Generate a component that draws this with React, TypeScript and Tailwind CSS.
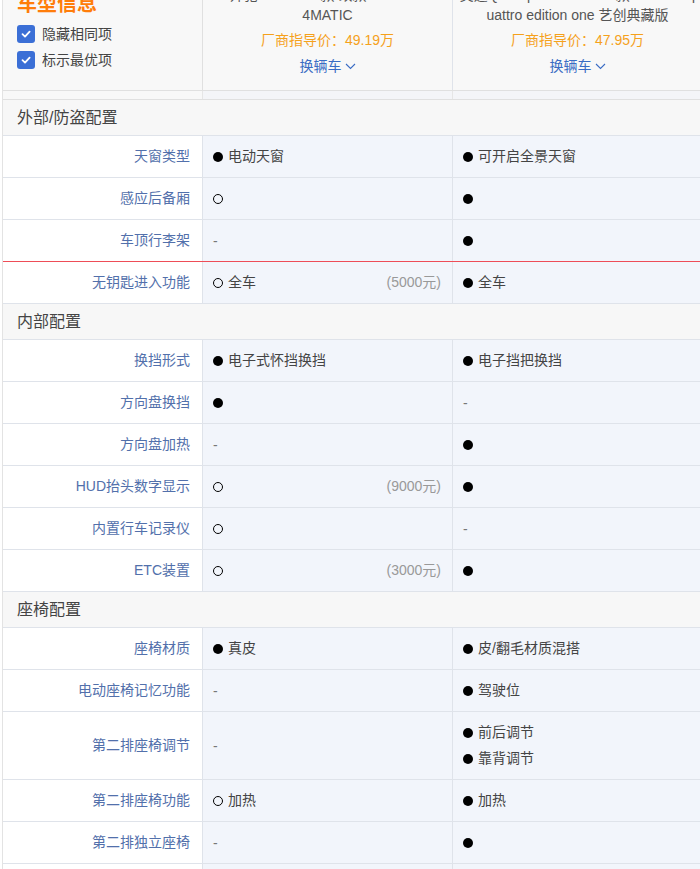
import React from "react";

type Val = { mark?: "full" | "empty" | "none"; text?: string; price?: string; lines?: string[] };
type Row = { label: string; a: Val; b: Val; tall?: boolean; red?: boolean };
type Section = { title: string; rows: Row[] };

const sections: Section[] = [
  {
    title: "外部/防盗配置",
    rows: [
      { label: "天窗类型", a: { mark: "full", text: "电动天窗" }, b: { mark: "full", text: "可开启全景天窗" } },
      { label: "感应后备厢", a: { mark: "empty" }, b: { mark: "full" } },
      { label: "车顶行李架", a: { mark: "none" }, b: { mark: "full" }, red: true },
      { label: "无钥匙进入功能", a: { mark: "empty", text: "全车", price: "(5000元)" }, b: { mark: "full", text: "全车" } },
    ],
  },
  {
    title: "内部配置",
    rows: [
      { label: "换挡形式", a: { mark: "full", text: "电子式怀挡换挡" }, b: { mark: "full", text: "电子挡把换挡" } },
      { label: "方向盘换挡", a: { mark: "full" }, b: { mark: "none" } },
      { label: "方向盘加热", a: { mark: "none" }, b: { mark: "full" } },
      { label: "HUD抬头数字显示", a: { mark: "empty", price: "(9000元)" }, b: { mark: "full" } },
      { label: "内置行车记录仪", a: { mark: "empty" }, b: { mark: "none" } },
      { label: "ETC装置", a: { mark: "empty", price: "(3000元)" }, b: { mark: "full" } },
    ],
  },
  {
    title: "座椅配置",
    rows: [
      { label: "座椅材质", a: { mark: "full", text: "真皮" }, b: { mark: "full", text: "皮/翻毛材质混搭" } },
      { label: "电动座椅记忆功能", a: { mark: "none" }, b: { mark: "full", text: "驾驶位" } },
      { label: "第二排座椅调节", a: { mark: "none" }, b: { lines: ["前后调节", "靠背调节"] }, tall: true },
      { label: "第二排座椅功能", a: { mark: "empty", text: "加热" }, b: { mark: "full", text: "加热" } },
      { label: "第二排独立座椅", a: { mark: "none" }, b: { mark: "full" } },
      { label: "", a: {}, b: {} },
    ],
  },
];

function Mark({ m }: { m?: Val["mark"] }) {
  if (m === "full") return <span className="inline-block w-[10px] h-[10px] rounded-full bg-black shrink-0" />;
  if (m === "empty") return <span className="inline-block w-[10px] h-[10px] rounded-full border-[1.5px] border-solid border-black shrink-0" />;
  if (m === "none") return <span className="text-[#777] leading-none">-</span>;
  return null;
}

function Cell({ v }: { v: Val }) {
  return (
    <div className="w-[250px] shrink-0 border-r border-[#dfe3ea] bg-[#f2f5fb] flex items-center pl-[10px] pr-[11px] text-[14px] text-[#444]">
      {v.lines ? (
        <div className="flex flex-col">
          {v.lines.map((l) => (
            <div key={l} className="flex items-center gap-[5px] h-[26px]">
              <Mark m="full" />
              <span>{l}</span>
            </div>
          ))}
        </div>
      ) : (
        <>
          <div className="flex items-center gap-[5px]">
            <Mark m={v.mark} />
            {v.text && <span>{v.text}</span>}
          </div>
          {v.price && <span className="ml-auto text-[#999]">{v.price}</span>}
        </>
      )}
    </div>
  );
}

function Check({ label }: { label: string }) {
  return (
    <div className="flex items-center h-[26px] gap-[7px]">
      <span className="w-[18px] h-[18px] rounded-[3px] bg-[#3b6fd6] flex items-center justify-center">
        <svg width="12" height="12" viewBox="0 0 12 12" fill="none">
          <path d="M2.5 6.2 5 8.6 9.6 3.6" stroke="white" strokeWidth="1.8" strokeLinecap="round" strokeLinejoin="round" />
        </svg>
      </span>
      <span className="text-[14px] text-[#444]">{label}</span>
    </div>
  );
}

function CarHead({ l1, l2, price }: { l1: string; l2: string; price: string }) {
  return (
    <div className="w-[250px] shrink-0 border-r border-[#dfe3ea] flex flex-col items-center text-center">
      <div className="-mt-[15px] leading-[20px] text-[14px] text-[#555] whitespace-nowrap">{l1}</div>
      <div className="leading-[20px] text-[14px] text-[#555] whitespace-nowrap">{l2}</div>
      <div className="mt-[3px] leading-[24px] text-[14px] text-[#f5a11c]">厂商指导价：{price}</div>
      <div className="mt-[2px] leading-[24px] text-[14px] text-[#3a6cc4] flex items-center gap-[3px]">
        换辆车
        <svg width="11" height="7" viewBox="0 0 11 7" fill="none">
          <path d="M1 1 5.5 5.5 10 1" stroke="#3a6cc4" strokeWidth="1.1" />
        </svg>
      </div>
    </div>
  );
}

function TableRow({ r }: { r: Row }) {
  const cells = (
    <>
      <div className="w-[200px] shrink-0 border-r border-[#dfe3ea] flex items-center justify-end pr-[12px] text-[14px] text-[#5270ab]">
        {r.label}
      </div>
      <Cell v={r.a} />
      <Cell v={r.b} />
    </>
  );
  if (r.red)
    return (
      <>
        <div className="flex h-[41px]">{cells}</div>
        {/* hover marker line */}
        <div className="h-px bg-[#ee4d57]" />
      </>
    );
  if (r.tall) return <div className="flex h-[68px] border-b border-[#dfe3ea]">{cells}</div>;
  return <div className="flex h-[42px] border-b border-[#dfe3ea]">{cells}</div>;
}

export default function App() {
  return (
    <div
      className="w-[700px] h-[869px] overflow-hidden bg-white"
      style={{ fontFamily: '"Liberation Sans", "Noto Sans CJK SC", sans-serif' }}
    >
      <div className="ml-[2px] border-l border-[#e3e3e3] w-[900px]">
        {/* Header */}
        <div className="flex h-[91px] border-b border-[#e0e0e0] bg-[#f8f8f8] overflow-hidden">
          <div className="w-[200px] shrink-0 border-r border-[#e0e0e0] pl-[14px]">
            <div className="-mt-[8px] h-[24px] leading-[24px] text-[20px] font-bold text-[#ff7d0a]">车型信息</div>
            <div className="mt-[5px]">
              <Check label="隐藏相同项" />
              <Check label="标示最优项" />
            </div>
          </div>
          <CarHead l1="奔驰GLE 2023款 改款 GLE 350" l2="4MATIC" price="49.19万" />
          <CarHead l1="奥迪Q5L Sportback 2021款 45 TFSI q" l2="uattro edition one 艺创典藏版" price="47.95万" />
        </div>
        <div className="flex h-[9px] border-b border-[#e0e0e0] bg-[#f8f8f8]">
          <div className="w-[200px] shrink-0 border-r border-[#e6e6e6]" />
          <div className="w-[250px] shrink-0 border-r border-[#e6e6e6] bg-[#f4f5f8]" />
          <div className="w-[250px] shrink-0 border-r border-[#e6e6e6] bg-[#f4f5f8]" />
        </div>

        {sections.map((s) => (
          <div key={s.title}>
            <div className="h-[36px] border-b border-[#dfe3ea] bg-[#f7f7f7] flex items-center pl-[14px] text-[16px] text-[#444]">
              {s.title}
            </div>
            {s.rows.map((r, i) => (
              <TableRow key={i} r={r} />
            ))}
          </div>
        ))}
      </div>
    </div>
  );
}
